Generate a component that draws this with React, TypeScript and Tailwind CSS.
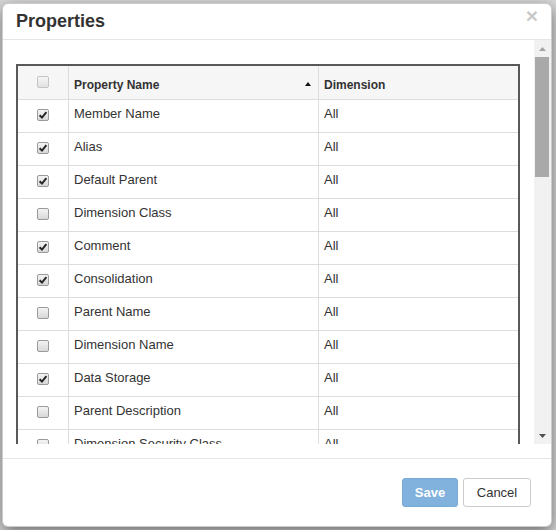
import React from "react";

const rows: { name: string; checked: boolean }[] = [
  { name: "Member Name", checked: true },
  { name: "Alias", checked: true },
  { name: "Default Parent", checked: true },
  { name: "Dimension Class", checked: false },
  { name: "Comment", checked: true },
  { name: "Consolidation", checked: true },
  { name: "Parent Name", checked: false },
  { name: "Dimension Name", checked: false },
  { name: "Data Storage", checked: true },
  { name: "Parent Description", checked: false },
  { name: "Dimension Security Class", checked: false },
];

function Check({ checked, faded }: { checked: boolean; faded?: boolean }) {
  return (
    <div
      className={
        faded
          ? "w-[12px] h-[12px] rounded-[2px] border border-[#c4c4c4] bg-gradient-to-b from-[#f6f6f6] to-[#e2e2e2] flex items-center justify-center"
          : "w-[12px] h-[12px] rounded-[2px] border border-[#9a9a9a] bg-gradient-to-b from-[#f4f4f4] to-[#d8d8d8] flex items-center justify-center"
      }
    >
      {checked && (
        <svg width="10" height="10" viewBox="0 0 10 10">
          <path d="M1.6 5.2 L4 7.6 L8.4 2.2" fill="none" stroke="#262626" strokeWidth="2" strokeLinejoin="miter" />
        </svg>
      )}
    </div>
  );
}

export default function App() {
  return (
    <div className="w-[556px] h-[530px] overflow-hidden bg-[#d8d8d8] pl-[2px] pt-[3px] font-['Liberation_Sans',Arial,sans-serif] text-[#333]">
      <div className="w-[550px] h-[524px] bg-white border border-[rgba(0,0,0,0.2)] rounded-[6px] shadow-[0_5px_15px_rgba(0,0,0,0.5)] flex flex-col overflow-hidden">
        {/* header */}
        <div className="h-[36px] shrink-0 border-b border-[#e5e5e5] flex justify-between pl-[13px] pr-[13px]">
          <div className="pt-[7px] text-[18px] leading-[20px] font-bold text-[#333]">Properties</div>
          <div className="pt-[1px] text-[21px] leading-[21px] font-bold text-[#c9c9c9]">×</div>
        </div>
        {/* body */}
        <div className="h-[404px] shrink-0 flex">
          <div className="flex-1 overflow-hidden pl-[13px] pt-[24px]">
            <div className="w-[504px] border-2 border-b-0 border-[#595959]">
              <div className="h-[34px] flex border-b border-[#dddddd] bg-[#f6f6f6]">
                <div className="w-[51px] shrink-0 border-r border-[#dddddd] flex justify-center pt-[10px]">
                  <Check checked={false} faded />
                </div>
                <div className="w-[250px] shrink-0 border-r border-[#dddddd] flex justify-between pl-[5px] pr-[7px] pt-[11px] text-[12px] leading-[17px] font-bold">
                  <span>Property Name</span>
                  <svg width="6" height="4" viewBox="0 0 6 4" className="mt-[5px]">
                    <path d="M0 4 L3 0 L6 4 Z" fill="#111" />
                  </svg>
                </div>
                <div className="flex-1 pl-[5px] pt-[11px] text-[12px] leading-[17px] font-bold">Dimension</div>
              </div>
              {rows.map((r) => (
                <div key={r.name} className="h-[33px] flex border-b border-[#dddddd] text-[13px] leading-[18px]">
                  <div className="w-[51px] shrink-0 border-r border-[#dddddd] flex justify-center pt-[9px]">
                    <Check checked={r.checked} />
                  </div>
                  <div className="w-[250px] shrink-0 border-r border-[#dddddd] pl-[5px] pt-[5px]">{r.name}</div>
                  <div className="flex-1 pl-[5px] pt-[5px]">All</div>
                </div>
              ))}
            </div>
          </div>
          {/* scrollbar */}
          <div className="w-[17px] shrink-0 bg-[#f1f1f1] flex flex-col">
            <div className="h-[17px] flex items-center justify-center">
              <svg width="7" height="4" viewBox="0 0 7 4">
                <path d="M0 4 L3.5 0 L7 4 Z" fill="#a3a3a3" />
              </svg>
            </div>
            <div className="h-[120px] w-[14px] ml-[1px] bg-[#a9a9a9]" />
            <div className="flex-1" />
            <div className="h-[17px] flex items-center justify-center">
              <svg width="7" height="4" viewBox="0 0 7 4">
                <path d="M0 0 L3.5 4 L7 0 Z" fill="#505050" />
              </svg>
            </div>
          </div>
        </div>
        <div className="h-[14px] shrink-0" />
        {/* footer */}
        <div className="flex-1 border-t border-[#e5e5e5] flex justify-end items-start pt-[19px] pr-[20px] gap-[5px]">
          <button className="h-[29px] w-[56px] rounded-[3px] bg-[#80b2dd] border border-[#78aad6] text-white text-[13px] font-bold">
            Save
          </button>
          <button className="h-[29px] w-[68px] rounded-[3px] bg-white border border-[#cccccc] text-[#333] text-[13px]">
            Cancel
          </button>
        </div>
      </div>
    </div>
  );
}
